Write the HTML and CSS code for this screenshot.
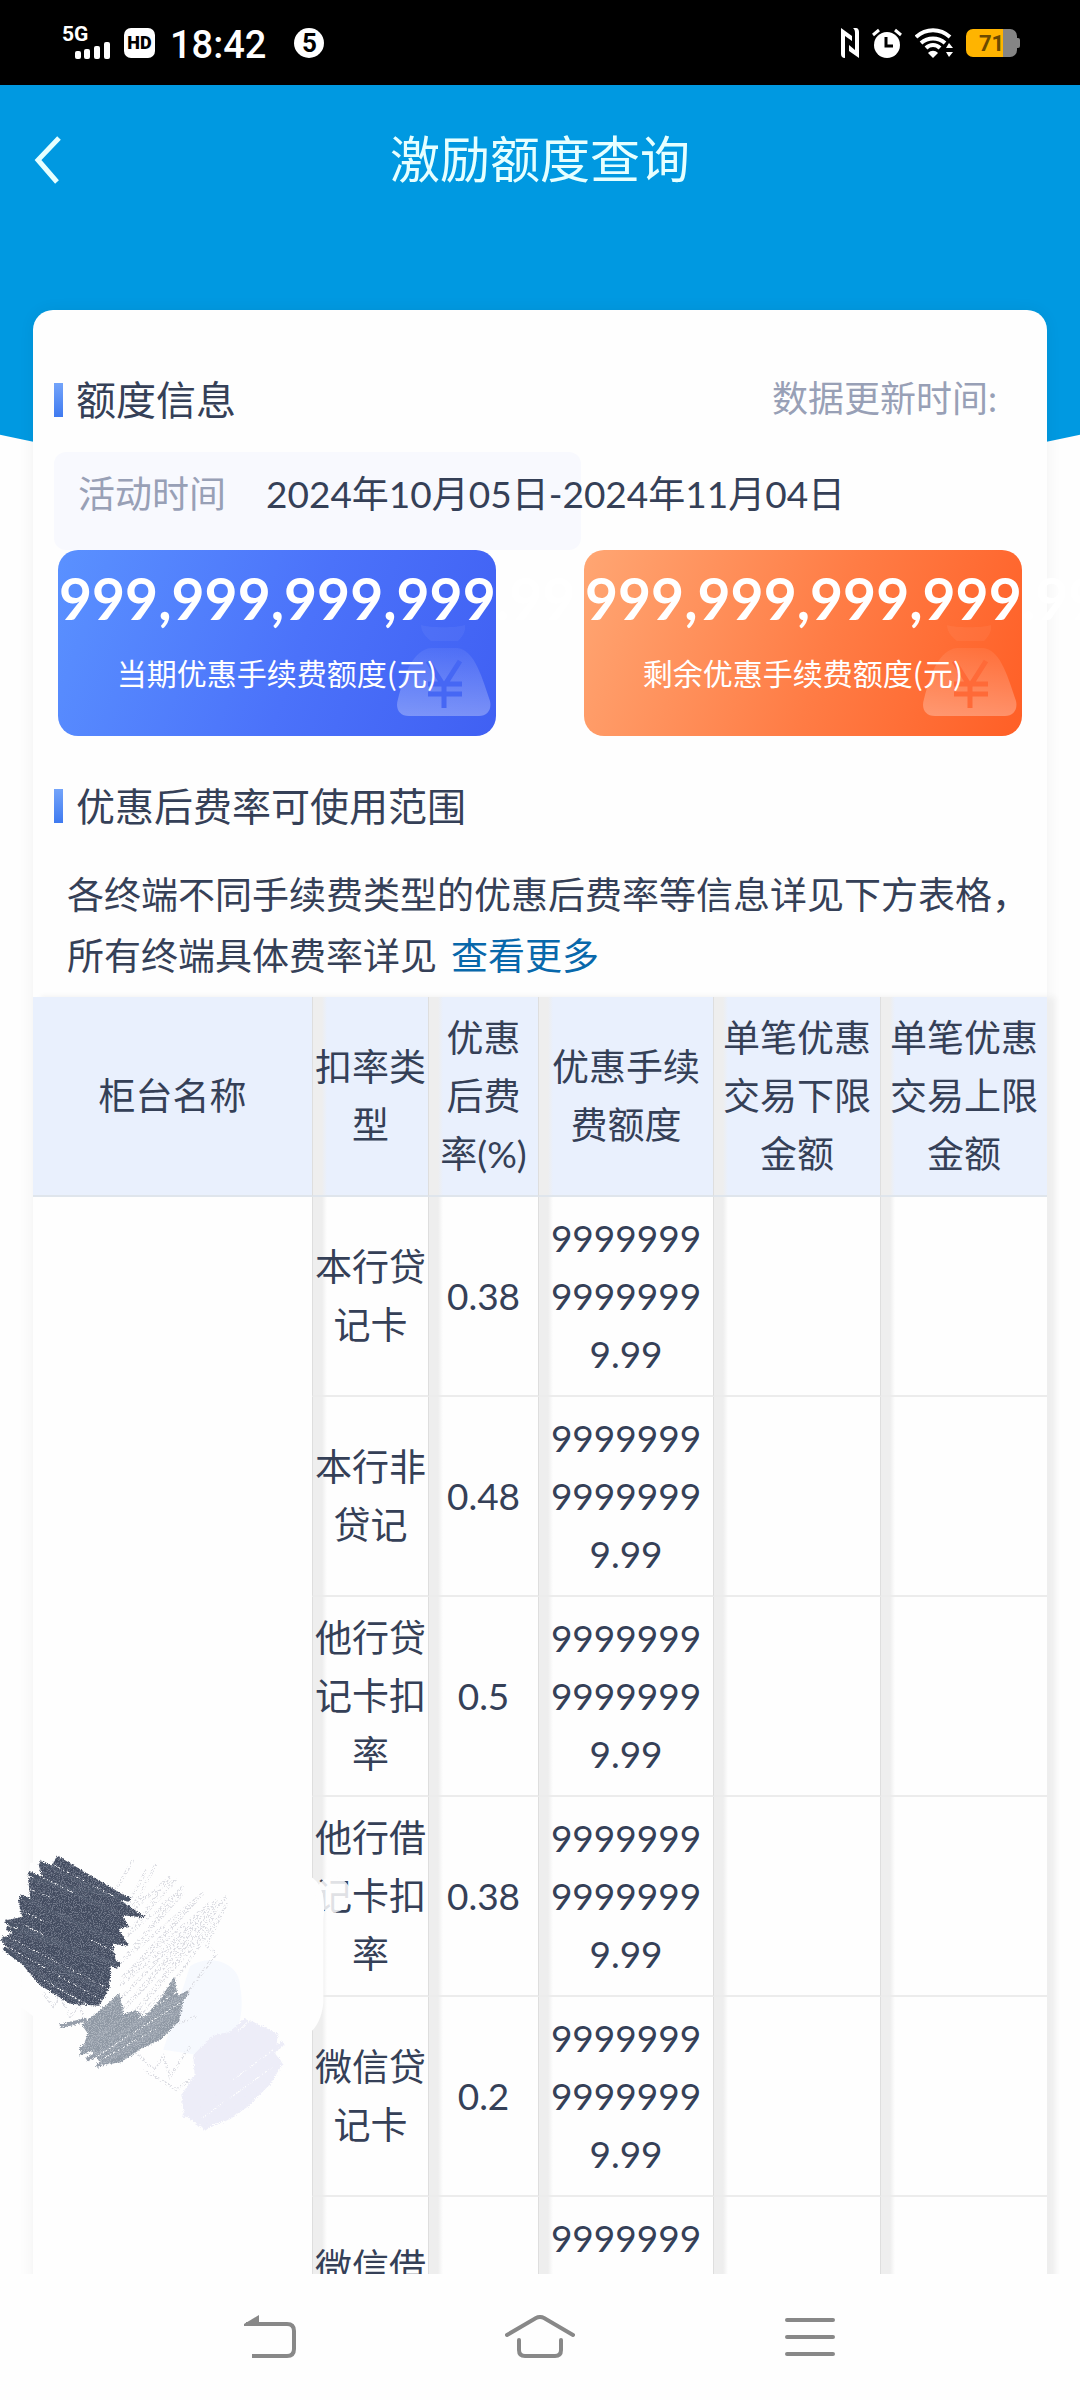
FILE: index.html
```html
<!DOCTYPE html>
<html lang="zh-CN">
<head>
    <meta charset="UTF-8">
    <meta name="viewport" content="width=device-width, initial-scale=1.0">
    <title>激励额度查询</title>
    <link rel="stylesheet" href="styles.css">
</head>
<body>
    <div class="status-bar">
        <div class="status-left">
            <div class="signal">
                <span class="network">5G</span>
                <svg class="bars" width="36" height="17" viewBox="0 0 36 17" fill="#fff">
                    <rect x="0" y="9" width="6" height="8" rx="2"/>
                    <rect x="9" y="7" width="6" height="10" rx="2"/>
                    <rect x="19" y="4" width="6" height="13" rx="2"/>
                    <rect x="29" y="0" width="6" height="17" rx="2"/>
                </svg>
            </div>
            <span class="hd">HD</span>
            <span class="time">18:42</span>
            <span class="notice">5</span>
        </div>
        <div class="status-right">
            <svg width="18" height="30" viewBox="0 0 18 30" fill="#fff">
                <path d="M0 0l11 8v5L4 8v22c-3 0-4-2-4-4zM18 30L8 23v-6l6 5V5c0-3-1-4-2-5h3c2 0 3 2 3 4z"/>
            </svg>
            <svg width="30" height="30" viewBox="0 0 30 30">
                <circle cx="15" cy="17" r="13" fill="#fff"/>
                <path d="M1 7l6-5M29 7l-6-5" stroke="#fff" stroke-width="3"/>
                <path d="M14 9v9h7" stroke="#000" stroke-width="3" fill="none"/>
            </svg>
            <svg width="38" height="30" viewBox="0 0 38 30">
                <path d="M1 9c10-9 24-9 34 0M6 15c7-6 17-6 24 0M11 20c4-4 10-4 14 0" stroke="#fff" stroke-width="4" fill="none"/>
                <path d="M13 25c3-3 7-3 10 0l-5 5z" fill="#fff"/>
                <path d="M31 20l3-5 4 5zM31 24h7l-4 5z" fill="#fff"/>
            </svg>
            <div class="battery">71</div>
        </div>
    </div>

    <main class="app">
        <header class="navbar">
            <button class="back" aria-label="返回">
                <svg width="28" height="48" viewBox="0 0 28 48" fill="none" stroke="#e6ffff" stroke-width="5">
                    <path d="M25 2L4 24l19 22"/>
                </svg>
            </button>
            <h1>激励额度查询</h1>
        </header>

        <div class="panel">
            <div class="section-head">
                <h2>额度信息</h2>
                <span class="update-time">数据更新时间:</span>
            </div>
            <div class="period">
                <span class="period-label">活动时间</span>
                <span>2024年10月05日-2024年11月04日</span>
            </div>

            <div class="quotas">
                <div class="quota blue">
                    <svg class="bag" width="94" height="94" viewBox="0 0 94 94">
                        <defs>
                            <linearGradient id="bagFill" x1="0" y1="0" x2="0" y2="1">
                                <stop offset="0" stop-color="#fff" stop-opacity="0.06"/>
                                <stop offset="1" stop-color="#fff" stop-opacity="0.3"/>
                            </linearGradient>
                        </defs>
                        <path d="M24 2c8 3 36 3 44 0 1 7-3 12-7 16H34C29 14 24 9 24 2z" fill="#fff" opacity="0.05"/>
                        <path d="M34 25h26c16 2 23 22 33 53 2 9-3 15-11 15H12C2 93-2 85 1 76 8 50 16 27 34 25z" fill="url(#bagFill)"/>
                        <path class="yen" d="M31 38l16 25 16-25M47 63v22M31 61h34M31 71h34" fill="none" stroke-width="5"/>
                    </svg>
                    <div class="quota-value">999,999,999,999.99</div>
                    <div class="quota-label">当期优惠手续费额度(元)</div>
                </div>
                <div class="quota orange">
                    <svg class="bag" width="94" height="94" viewBox="0 0 94 94">
                        <path d="M24 2c8 3 36 3 44 0 1 7-3 12-7 16H34C29 14 24 9 24 2z" fill="#fff" opacity="0.05"/>
                        <path d="M34 25h26c16 2 23 22 33 53 2 9-3 15-11 15H12C2 93-2 85 1 76 8 50 16 27 34 25z" fill="url(#bagFill)"/>
                        <path class="yen" d="M31 38l16 25 16-25M47 63v22M31 61h34M31 71h34" fill="none" stroke-width="5"/>
                    </svg>
                    <div class="quota-value">999,999,999,999.99</div>
                    <div class="quota-label">剩余优惠手续费额度(元)</div>
                </div>
            </div>

            <div class="section-head range">
                <h2>优惠后费率可使用范围</h2>
            </div>
            <p class="desc">各终端不同手续费类型的优惠后费率等信息详见下方表格，所有终端具体费率详见<a href="#">查看更多</a></p>

            <table class="rates">
                <colgroup>
                    <col>
                    <col class="col-type">
                    <col class="col-rate">
                    <col class="col-quota">
                    <col class="col-limit">
                    <col class="col-limit">
                </colgroup>
                <thead>
                    <tr>
                        <th>柜台名称</th>
                        <th>扣率类型</th>
                        <th>优惠后费率(%)</th>
                        <th>优惠手续费额度</th>
                        <th>单笔优惠交易下限金额</th>
                        <th>单笔优惠交易上限金额</th>
                    </tr>
                </thead>
                <tbody>
                    <tr>
                        <td class="counter" rowspan="6">
                            <!-- 涂抹遮盖柜台名称 -->
                            <svg class="scribble" width="360" height="300" viewBox="0 0 1080 900" fill="none">
                                <defs>
                                    <filter id="rough" x="-5%" y="-5%" width="110%" height="110%">
                                        <feTurbulence type="fractalNoise" baseFrequency="0.3" numOctaves="2" seed="4"/>
                                        <feDisplacementMap in="SourceGraphic" scale="14" xChannelSelector="R" yChannelSelector="G"/>
                                    </filter>
                                    <filter id="chalk" x="-5%" y="-5%" width="110%" height="110%">
                                        <feTurbulence type="fractalNoise" baseFrequency="0.2" numOctaves="3" seed="9" result="n"/>
                                        <feColorMatrix in="n" values="0 0 0 0 0  0 0 0 0 0  0 0 0 0 0  9 0 0 0 -4.6" result="m"/>
                                        <feComposite in="SourceGraphic" in2="m" operator="in"/>
                                    </filter>
                                    <filter id="grain" x="0" y="0" width="100%" height="100%">
                                        <feTurbulence type="fractalNoise" baseFrequency="0.3" numOctaves="2" seed="2" result="n"/>
                                        <feColorMatrix in="n" values="0 0 0 0 0  0 0 0 0 0  0 0 0 0 0  5 0 0 0 -2.3" result="m"/>
                                        <feComposite in="SourceGraphic" in2="m" operator="in"/>
                                    </filter>
                                    <path id="dark" d="M172 8l215 128-45-8 96 66-72-8 22 36-32 6 30 50-48-6 14 76-20-10-4 66-30 54-88-6-90-56L4 262l56-40-42-20 48-10-12-52 38 4-8-70 44 4-12-44 38 4z"/>
                                    <path id="grey" d="M522 372l-40 66-50 54-26-20-34 12-14-62-46 40-66 54 18 26-26 66 38-14 30 42 56-8 60-40 62-30 54-54 8-54 20-30-34 4z"/>
                                </defs>
                                <path d="M90 30C300 0 700 30 900 60c60 10 80 60 70 140v250c-10 100-80 130-180 120L300 640 60 460z" fill="#fefefe"/>
                                <circle cx="1000" cy="125" r="53" fill="#fefefe" opacity="0.85"/>
                                <path d="M570 340c60-40 150-10 150 60 20 100-20 200-100 210l-130-20z" fill="#f6f9fe"/>
                                <g filter="url(#chalk)" stroke="#dcdde3" stroke-width="9">
                                    <path d="M400 20l-70 120M470 30l-80 150 120-110-130 180 170-150-190 230 250-210-250 280 290-250-290 330 320-350-310 390 290-330-260 370M680 150l-60 130 30 20-170 230 110-40"/>
                                    <path d="M440 50l-60 110 150-80-140 150 160-110-180 200 230-190-240 250 270-230-280 300 300-310-300 350 300-310-280 350 130-120M130 420l30 40 20-30 30 60 30-30 20 60"/>
                                    <path d="M400 590l60 60 30-40 20 60 60-90M640 590l-10 60M430 650l100 60 40-30"/>
                                </g>
                                <g filter="url(#rough)">
                                    <use href="#dark" fill="#434b5f"/>
                                    <path stroke="#4c5467" stroke-width="13" d="M120 28l200 100M85 60l270 120M60 130l300 140M15 205l330 130M5 255l310 160M10 285l230 165M90 80l300 60M20 225l340 110"/>
                                    <use href="#grey" fill="#8f98a4"/>
                                    <path stroke="#979fab" stroke-width="12" d="M565 418L330 560M545 470L260 620M480 530L290 640M240 590l110-80M180 520l80-20"/>
                                    <path fill="#ededf8" d="M750 502l-30 30-80 14-60 60 4 60-40 60 8 60 30 20 30 20 70-24 60-40 70-70 36-60-22-30 8-60z"/>
                                    <path stroke="#ededf8" stroke-width="14" d="M850 570L550 790M840 620L590 815M790 700L610 828M740 500l-90 80"/>
                                </g>
                                <g filter="url(#grain)">
                                    <use href="#dark" fill="#737a8b"/>
                                    <use href="#grey" fill="#b0b7c0"/>
                                </g>
                                <g filter="url(#chalk)" stroke="#fefefe" stroke-width="4">
                                    <path d="M150 30l210 110M120 70l100 48M80 105l90 36M270 260l100 50M50 165l80 40M70 215l60 30M30 255l310 160M30 285l280 160M130 380l140 80"/>
                                    <path d="M540 410L410 500M540 450L290 610M480 520L270 640M820 590L700 680M820 640L600 800"/>
                                </g>
                            </svg>
                        </td>
                        <td>本行贷记卡</td><td>0.38</td><td class="amount">999999999999999.99</td><td></td><td></td>
                    </tr>
                    <tr><td>本行非贷记</td><td>0.48</td><td class="amount">999999999999999.99</td><td></td><td></td></tr>
                    <tr><td>他行贷记卡扣率</td><td>0.5</td><td class="amount">999999999999999.99</td><td></td><td></td></tr>
                    <tr><td>他行借记卡扣率</td><td>0.38</td><td class="amount">999999999999999.99</td><td></td><td></td></tr>
                    <tr><td>微信贷记卡</td><td>0.2</td><td class="amount">999999999999999.99</td><td></td><td></td></tr>
                    <tr><td>微信借记卡</td><td></td><td class="amount">999999999999999.99</td><td></td><td></td></tr>
                </tbody>
            </table>
        </div>
    </main>

    <nav class="system-nav">
        <button aria-label="返回">
            <svg width="52" height="44" viewBox="0 0 52 44" fill="none" stroke="#888" stroke-width="4">
                <path d="M2 9h41q7 0 7 7v18q0 7-7 7H8"/>
                <path d="M0 9L15 0v11H0z" fill="#888" stroke="none"/>
            </svg>
        </button>
        <button aria-label="主屏幕">
            <svg width="70" height="44" viewBox="0 0 70 44" fill="none" stroke="#888" stroke-width="4" stroke-linecap="round">
                <path d="M2 20L31 3q4-2 8 0l29 17M14 25v10q0 6 6 6h30q6 0 6-6V25"/>
            </svg>
        </button>
        <button aria-label="最近任务">
            <svg width="50" height="40" viewBox="0 0 50 40" stroke="#888" stroke-width="4" stroke-linecap="round">
                <path d="M2 3h46M2 20h46M2 37h46"/>
            </svg>
        </button>
    </nav>
</body>
</html>
```

FILE: styles.css
```css
/* 全局样式 */
* { box-sizing: border-box; }
html, body {
    margin: 0;
    padding: 0;
}
body {
    display: flex;
    flex-direction: column;
    height: 100vh;
    font-family: Lato, "Noto Sans CJK SC", sans-serif;
    font-size: 37px;
    color: #354057;
    background-color: #fefefe;
}
button {
    border: none;
    background: none;
    padding: 0;
    cursor: pointer;
}
svg { display: block; }

/* 状态栏 */
.status-bar {
    display: flex;
    align-items: center;
    justify-content: space-between;
    flex: none;
    height: 85px;
    padding: 0 63px 0 62px;
    background-color: #000;
    color: #fff;
    font-family: Roboto, sans-serif;
}
.status-left,
.status-right {
    display: flex;
    align-items: center;
}
.status-right { gap: 13px; }
.signal {
    width: 48px;
    height: 32px;
    margin-right: 14px;
}
.network {
    display: block;
    font-size: 21px;
    line-height: 15px;
    font-weight: bold;
}
.bars { margin-left: 13px; }
.hd {
    width: 31px;
    height: 30px;
    border-radius: 7px;
    background-color: #fff;
    color: #000;
    font-size: 18px;
    font-weight: 900;
    line-height: 30px;
    text-align: center;
}
.time {
    margin: 0 28px 0 15px;
    padding-top: 4px;
    font-size: 38px;
    font-weight: 500;
}
.notice {
    width: 30px;
    height: 30px;
    border-radius: 50%;
    background-color: #fff;
    color: #000;
    font-size: 26px;
    font-weight: bold;
    line-height: 31px;
    text-align: center;
}
.battery {
    position: relative;
    width: 51px;
    height: 28px;
    border-radius: 7px;
    background: linear-gradient(to right, #ffb400 72%, #858585 72%);
    color: #6b4a00;
    font-size: 22px;
    font-weight: bold;
    line-height: 29px;
    text-align: center;
}
.battery::after {
    content: "";
    position: absolute;
    top: 9px;
    left: 100%;
    width: 3px;
    height: 10px;
    border-radius: 0 2px 2px 0;
    background-color: #858585;
}

/* 页面主体 */
.app {
    position: relative;
    flex: 1;
    min-height: 0;
    overflow: hidden;
}
.app::before {
    content: "";
    position: absolute;
    top: 0;
    left: 0;
    right: 0;
    height: 404px;
    background-color: #0099e1;
    clip-path: ellipse(100% 100% at 50% 0);
}
.navbar {
    position: relative;
    display: flex;
    align-items: center;
    justify-content: center;
    height: 150px;
    color: #e6ffff;
}
.navbar h1 {
    margin: 0;
    padding-bottom: 8px;
    font-family: "Noto Sans CJK SC", sans-serif;
    font-size: 50px;
    font-weight: normal;
    line-height: 60px;
}
.back {
    position: absolute;
    left: 34px;
}

/* 额度面板 */
.panel {
    position: relative;
    margin: 75px 33px 0;
    padding-top: 60px;
    border-radius: 20px;
    background-color: #fefefe;
    box-shadow: 0 0 16px rgba(0, 0, 0, 0.06);
}
.section-head {
    display: flex;
    align-items: center;
    justify-content: space-between;
    height: 60px;
    padding: 0 50px 0 21px;
    line-height: 54px;
}
.section-head h2 {
    display: flex;
    align-items: center;
    gap: 13px;
    margin: 0;
    font-size: 40px;
    font-weight: normal;
}
.section-head h2::before {
    content: "";
    width: 9px;
    height: 34px;
    background: linear-gradient(#74a4fa, #3f7af0);
}
.update-time {
    padding-bottom: 4px;
    color: #98a0b6;
    font-size: 36px;
}
.range { margin-top: 40px; }
.section-head.range h2 { font-size: 39px; }
.period {
    display: flex;
    width: 52%;
    height: 98px;
    margin: 22px 0 0 21px;
    padding: 14px 24px;
    border-radius: 12px;
    background-color: #f8f9fe;
    line-height: 56px;
    white-space: nowrap;
}
.period-label {
    margin-right: 40px;
    color: #98a0b6;
}

/* 额度卡片 */
.quotas {
    display: flex;
    justify-content: space-between;
    padding: 0 25px;
}
.quota {
    position: relative;
    width: 45%;
    flex: 0 1 438px;
    height: 186px;
    padding: 18px 1px 0;
    border-radius: 20px;
    color: #fff;
}
.quota.blue { background: linear-gradient(110deg, #5a91ff, #4b72fa 55%, #4060f3); }
.quota.orange { background: linear-gradient(110deg, #ffa673, #ff7c45 55%, #ff5f26); }
.quota-value {
    position: relative;
    font-size: 57px;
    font-weight: bold;
    line-height: 60px;
    white-space: nowrap;
}
.quota-label {
    position: relative;
    margin-top: 24px;
    font-family: "Noto Sans CJK SC", sans-serif;
    font-size: 30px;
    line-height: 40px;
    text-align: center;
}
.bag {
    position: absolute;
    right: 5px;
    bottom: 19px;
}
.yen { stroke: #4667f4; }
.orange .yen { stroke: #ff6a38; }

.desc {
    margin: 28px 14px 0 34px;
    line-height: 61px;
}
.desc a {
    margin-left: 14px;
    color: #0868ab;
    text-decoration: none;
}

/* 费率表格 */
.rates {
    width: 100%;
    margin-top: 11px;
    border-collapse: separate;
    border-spacing: 0;
    table-layout: fixed;
    line-height: 58px;
    text-align: center;
    word-break: break-all;
    box-shadow: 8px 0 6px #eee;
}
.col-type { width: 116px; }
.col-rate { width: 110px; }
.col-quota { width: 175px; }
.col-limit { width: 167px; }
.rates th,
.rates td {
    height: 200px;
    padding: 12px 1px;
    border-bottom: 2px solid #ececec;
    font-weight: normal;
    background-color: #fefefe;
}
.rates th {
    background-color: #e9f0fd;
    border-bottom-color: #dfe5ec;
}
.rates th:not(:first-child),
.rates td:not(.counter) {
    border-left: 1px solid #dedede;
    background-image: linear-gradient(to right, #eee 9px, rgba(238, 238, 238, 0) 14px);
}
.rates .amount {
    padding: 12px 5px;
}
.rates .counter {
    position: relative;
    border-bottom: none;
}
.scribble {
    position: absolute;
    top: 656px;
    left: -33px;
}

/* 底部导航 */
.system-nav {
    display: flex;
    flex: none;
    height: 126px;
    padding: 0 135px;
    background-color: #fefefe;
}
.system-nav button {
    display: flex;
    flex: 1;
    align-items: center;
    justify-content: center;
}
```
